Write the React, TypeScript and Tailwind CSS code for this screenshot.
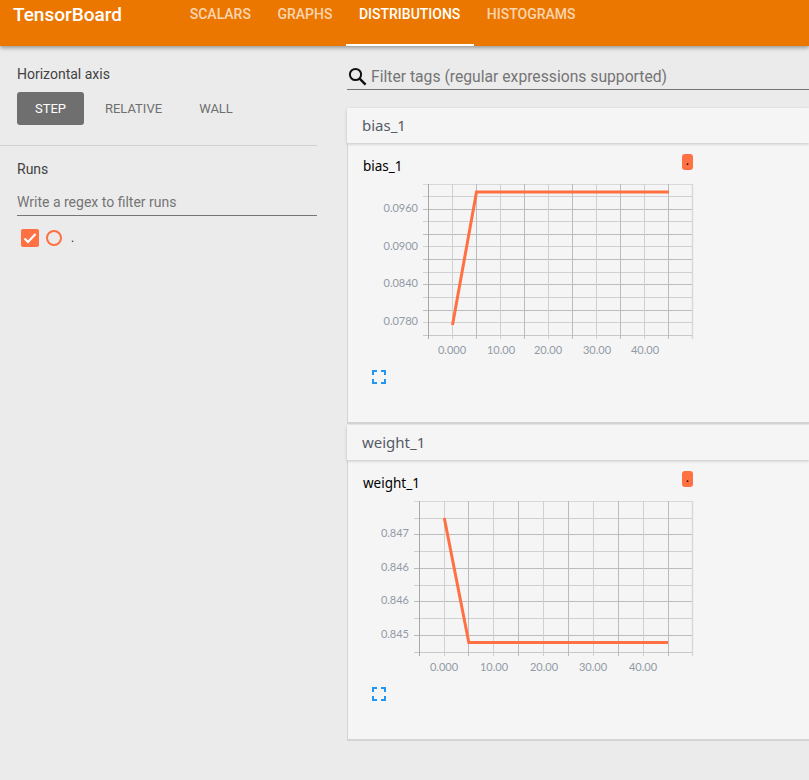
import React from "react";

type ChartProps = {
  height: number;
  top: number;
  vLines: number[];
  hLines: number[];
  yLabels: { text: string; y: number }[];
  xLabels: { text: string; x: number }[];
  labelX: number;
  xLabelY: number;
  points: string;
};

const SVG_LEFT = 360;

const gridColor = (i: number, total: number) => {
  if (i === 0 || i === total - 1) return "#d8d8d8";
  return i % 2 === 0 ? "#bcbcbc" : "#d0d0d0";
};

const Chart = ({ height, top, vLines, hLines, yLabels, xLabels, labelX, xLabelY, points }: ChartProps) => {
  const axisX = vLines[0];
  const axisY = hLines[hLines.length - 1];
  return (
    <svg width={340} height={height} viewBox={`${SVG_LEFT} ${top} 340 ${height}`} className="block">
      {hLines.map((y, i) => (
        <line
          key={y}
          x1={axisX - 5}
          x2={vLines[vLines.length - 1]}
          y1={y + 0.5}
          y2={y + 0.5}
          stroke={i === hLines.length - 1 ? "#c8c8c8" : gridColor(i, hLines.length)}
          strokeWidth={1}
        />
      ))}
      {vLines.map((x, i) => (
        <line
          key={x}
          x1={x + 0.5}
          x2={x + 0.5}
          y1={hLines[0]}
          y2={axisY + 4}
          stroke={i === 0 ? "#a8a8a8" : gridColor(i, vLines.length)}
          strokeWidth={i === vLines.length - 1 ? 1.5 : 1}
        />
      ))}
      {yLabels.map((l, i) => (
        <text key={i} x={labelX} y={l.y + 4} textAnchor="end" fontSize={11} fill="#929aa6" fontFamily="Lato, sans-serif">
          {l.text}
        </text>
      ))}
      {xLabels.map((l) => (
        <text key={l.text} x={l.x} y={xLabelY + 4} textAnchor="middle" fontSize={11} fill="#929aa6" fontFamily="Lato, sans-serif">
          {l.text}
        </text>
      ))}
      <polyline points={points} fill="none" stroke="#ff7043" strokeWidth={3} />
    </svg>
  );
};

const FullscreenIcon = () => (
  <svg width={14} height={14} viewBox="0 0 14 14" className="block">
    <path d="M0 5V0h5v2H2v3zM9 0h5v5h-2V2H9zM0 9h2v3h3v2H0zM12 9h2v5H9v-2h3z" fill="#2196f3" />
  </svg>
);

const Section = ({ name, chart }: { name: string; chart: ChartProps }) => (
  <section>
    <div className="relative z-10 flex h-[35px] items-center bg-[#f5f5f5] pl-[15px] text-[15px] text-[#555b66] shadow-[0_1px_3px_rgba(0,0,0,0.2)] [font-family:'Noto_Sans',sans-serif]">
      {name}
    </div>
    <div className="h-[281px] border-b-2 border-l border-[#d4d4d4] bg-[#f5f5f5] pl-[12px]">
      <div className="relative w-[340px]">
        <div className="flex h-[37px] items-center justify-between pl-[3px] pr-[7px]">
          <span className="mt-[10px] text-[13.5px] text-black [font-family:'Noto_Sans',sans-serif]">{name}</span>
          <span className="flex h-4 w-[11px] items-center justify-center rounded-[3px] bg-[#ff7043] text-[10px] font-bold leading-none text-black">
            .
          </span>
        </div>
        <Chart {...chart} />
        <div className="ml-[12px] mt-[14px]">
          <FullscreenIcon />
        </div>
      </div>
    </div>
  </section>
);

const biasChart: ChartProps = {
  height: 176,
  top: 180,
  vLines: [428, 452, 476, 500, 524, 548, 572, 596, 620, 644, 668, 692],
  hLines: [184, 196, 209, 221, 234, 246, 259, 272, 284, 297, 310, 322, 335],
  yLabels: [
    { text: "0.0960", y: 208 },
    { text: "0.0900", y: 246 },
    { text: "0.0840", y: 283 },
    { text: "0.0780", y: 321 },
  ],
  xLabels: [
    { text: "0.000", x: 452 },
    { text: "10.00", x: 501 },
    { text: "20.00", x: 548 },
    { text: "30.00", x: 597 },
    { text: "40.00", x: 645 },
  ],
  labelX: 418,
  xLabelY: 350,
  points: "452.5,325 476.5,192 669,192",
};

const weightChart: ChartProps = {
  height: 176,
  top: 497,
  vLines: [419, 444, 468, 493, 518, 543, 568, 593, 618, 643, 668, 692],
  hLines: [501, 518, 534, 551, 568, 585, 601, 618, 635, 652],
  yLabels: [
    { text: "0.847", y: 533 },
    { text: "0.846", y: 567 },
    { text: "0.846", y: 600 },
    { text: "0.845", y: 634 },
  ],
  xLabels: [
    { text: "0.000", x: 444 },
    { text: "10.00", x: 494 },
    { text: "20.00", x: 544 },
    { text: "30.00", x: 593 },
    { text: "40.00", x: 643 },
  ],
  labelX: 409,
  xLabelY: 667,
  points: "444.3,518 468.8,642.5 668,642.5",
};

const tabs = ["SCALARS", "GRAPHS", "DISTRIBUTIONS", "HISTOGRAMS"];

const App = () => {
  return (
    <div className="h-[780px] w-[809px] overflow-hidden bg-[#ebebeb] [font-family:Roboto,sans-serif]">
      <header className="relative z-20 flex h-[46px] items-start bg-[#ec7700] shadow-[0_2px_4px_rgba(0,0,0,0.35)]">
        <div className="w-[176.5px] pl-[13px] pt-[1px] text-[19px] font-medium leading-[27px] text-white">TensorBoard</div>
        {tabs.map((tab) => (
          <div
            key={tab}
            className={
              tab === "DISTRIBUTIONS"
                ? "h-[46px] border-b-2 border-white px-[13.25px] text-[14px] font-medium leading-[28px] text-white"
                : "h-[46px] px-[13.25px] text-[14px] font-medium leading-[28px] text-white/70"
            }
          >
            {tab}
          </div>
        ))}
      </header>

      <div className="flex">
        <aside className="w-[347px] shrink-0">
          <div className="w-[317px] border-b border-[#d0d0d0] pb-[20px] pl-[17px] pt-[19px]">
            <div className="text-[14px] leading-[18px] text-[#424242]">Horizontal axis</div>
            <div className="mt-[9px] flex">
              <div className="flex h-[33px] w-[67px] items-center justify-center rounded-[3px] bg-[#6f6f6f] text-[13px] text-white">
                STEP
              </div>
              <div className="flex h-[33px] w-[99px] items-center justify-center text-[13px] text-[#6f6f6f]">RELATIVE</div>
              <div className="flex h-[33px] w-[66px] items-center justify-center text-[13px] text-[#6f6f6f]">WALL</div>
            </div>
          </div>
          <div className="pl-[17px] pt-[14px]">
            <div className="text-[14px] leading-[18px] text-[#424242]">Runs</div>
            <div className="mt-[11px] h-[27px] w-[300px] border-b border-[#757575] text-[14px] leading-[26px] text-[#757575]">
              Write a regex to filter runs
            </div>
            <div className="ml-[4px] mt-[13px] flex items-center">
              <div className="flex h-[18px] w-[18px] items-center justify-center rounded-[2px] bg-[#ff7043]">
                <svg width={16} height={16} viewBox="0 0 16 16" fill="none" stroke="#fff" strokeWidth={2.2}>
                  <path d="M2.5 8.5l3.5 3.5 7.5-8" />
                </svg>
              </div>
              <div className="ml-[7px] h-[16px] w-[16px] rounded-full border-2 border-[#ff7043]" />
              <span className="ml-[9px] text-[12px] leading-[18px] text-[#212121]">.</span>
            </div>
          </div>
        </aside>

        <main className="min-w-0 flex-1 pt-[20px]">
          <div className="flex h-[23px] items-center border-b border-[#757575] box-content pb-0">
            <svg width={20} height={20} viewBox="0 0 20 20" fill="none" stroke="#111" className="ml-[1px] -mt-[2px] shrink-0">
              <circle cx="7.5" cy="7.5" r="5.6" strokeWidth={2} />
              <path d="M11.6 11.6l6 6" strokeWidth={2.4} />
            </svg>
            <span className="ml-[3px] -mt-[1px] text-[15.7px] text-[#757575]">Filter tags (regular expressions supported)</span>
          </div>
          <div className="mt-[18px] flex flex-col gap-[1px]">
            <Section name="bias_1" chart={biasChart} />
            <Section name="weight_1" chart={weightChart} />
          </div>
        </main>
      </div>
    </div>
  );
};

export default App;
